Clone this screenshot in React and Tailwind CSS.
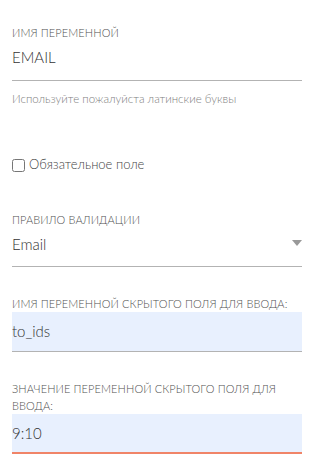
import React, { useState } from 'react';

const font = { fontFamily: 'Lato, "Noto Sans", sans-serif' };

const Label = ({ children }) => (
  <div className="text-[11px] leading-[17px] uppercase text-[#505050] tracking-[0.1px]">{children}</div>
);

const App = () => {
  const [required, setRequired] = useState(false);

  return (
    <div className="w-[313px] h-[468px] bg-white pl-3 pr-[11px] pt-[24px] font-light" style={font}>
      {/* Имя переменной */}
      <Label>Имя переменной</Label>
      <div className="h-[40px] pt-[6px] leading-[20px] text-[15px] text-[#333] border-b border-[#b3b3b3]">
        EMAIL
      </div>
      <div className="text-[11.5px] text-[#808080] mt-[10px] leading-[16px]">
        Используйте пожалуйста латинские буквы
      </div>

      {/* Обязательное поле */}
      <label className="flex items-center mt-[50px] text-[13px] text-[#444] h-[16px]">
        <input
          type="checkbox"
          checked={required}
          onChange={() => setRequired(!required)}
          className="w-[13px] h-[13px] m-0 mr-[4px]"
        />
        Обязательное поле
      </label>

      {/* Правило валидации */}
      <div className="mt-[38px]">
        <Label>Правило валидации</Label>
        <div className="h-[39px] pt-[6px] leading-[20px] flex items-start justify-between text-[15px] text-[#333] border-b border-[#b3b3b3]">
          <span>Email</span>
          <svg width="10" height="6" viewBox="0 0 10 6" className="mt-[6px]">
            <path d="M0 0h10L5 6z" fill="#999" />
          </svg>
        </div>
      </div>

      {/* Скрытое поле */}
      <div className="mt-[28px]">
        <Label>Имя переменной скрытого поля для ввода:</Label>
        <div className="h-[40px] flex items-center bg-[#e8f0fe] text-[15px] text-[#333] border-b border-[#b3b3b3]">
          to_ids
        </div>
      </div>

      <div className="mt-[28px]">
        <Label>Значение переменной скрытого поля для ввода:</Label>
        <div className="h-[40px] flex items-center bg-[#e8f0fe] text-[15px] text-[#333] border-b-2 border-[#f08468]">
          9:10
        </div>
      </div>
    </div>
  );
};

export default App;
